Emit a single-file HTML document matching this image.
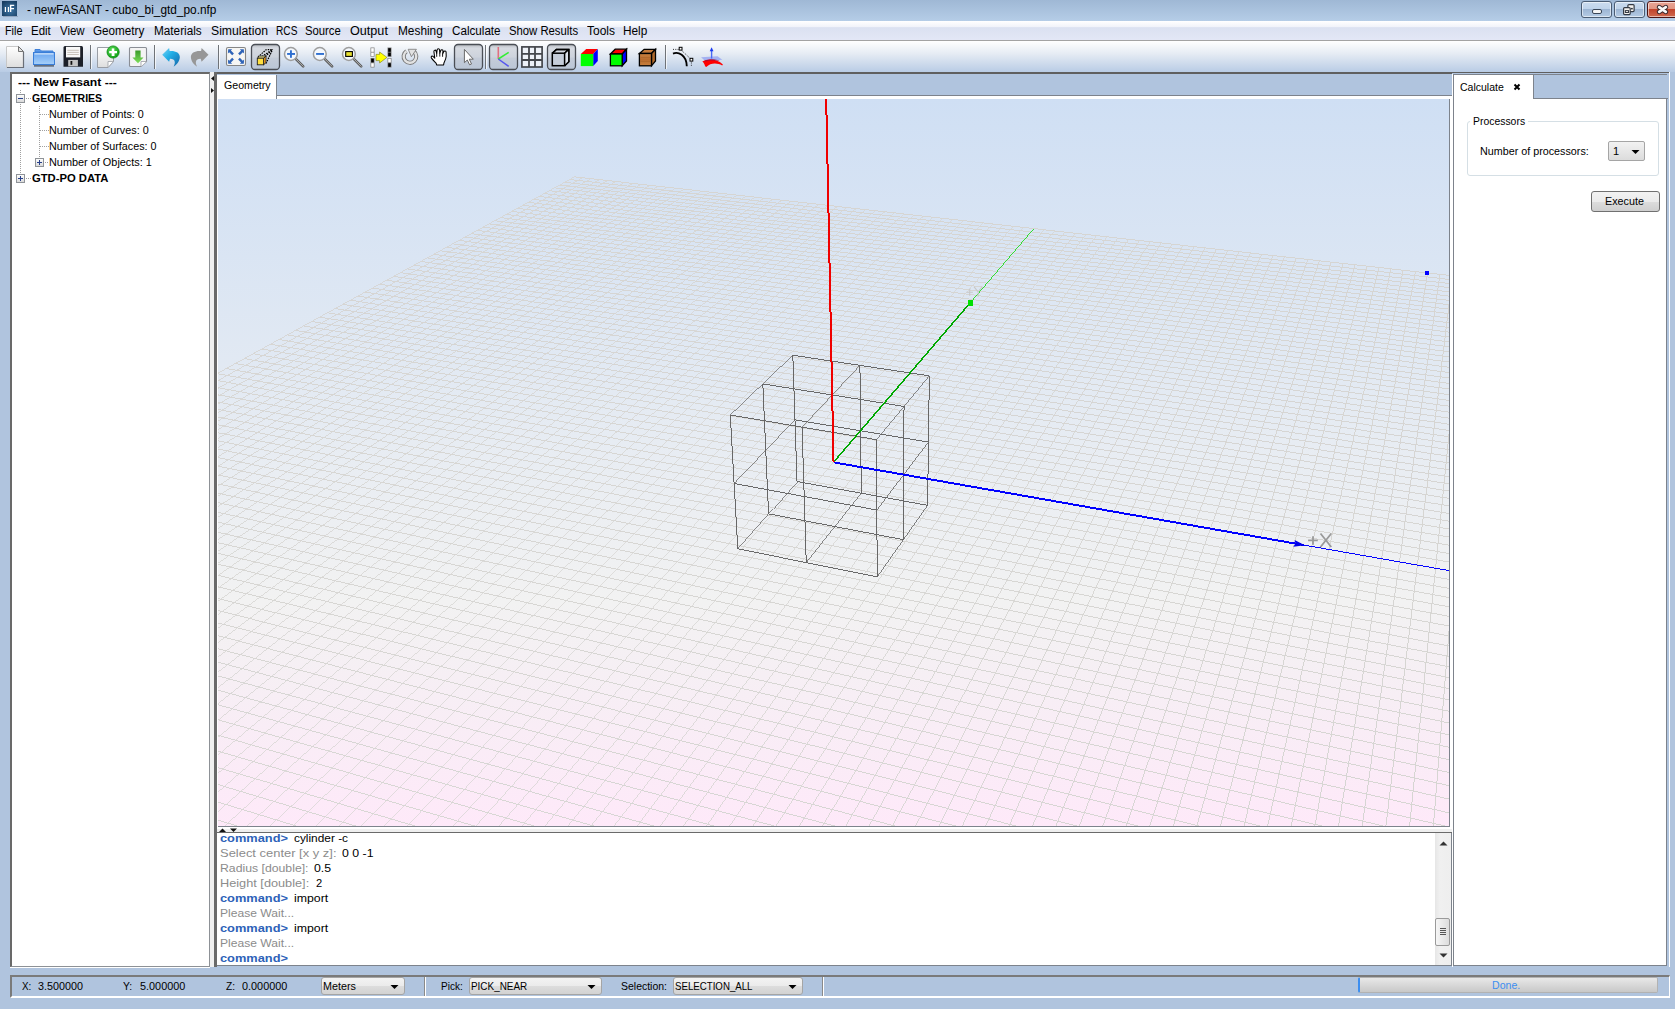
<!DOCTYPE html><html><head><meta charset="utf-8"><style>
*{margin:0;padding:0;box-sizing:border-box}
html,body{width:1675px;height:1009px;overflow:hidden;background:#b0c4de;font-family:'Liberation Sans', sans-serif;position:relative}
.a{position:absolute}
.t{position:absolute;white-space:pre;transform-origin:0 0;line-height:normal;font-family:'Liberation Sans', sans-serif}
</style></head><body>
<div class="a" style="left:0;top:0;width:1675px;height:21px;background:linear-gradient(#9fb8d5,#b5cde7)"></div><svg class="a" style="left:0;top:0" width="20" height="18"><defs><radialGradient id="ic" cx=".55" cy=".6" r=".7"><stop offset="0" stop-color="#3f78a8"/><stop offset="1" stop-color="#173c60"/></radialGradient></defs><rect x="2" y="1" width="15" height="15" fill="url(#ic)"/><rect x="3" y="16" width="15" height="1" fill="#7d90a8" opacity=".6"/><path d="M4.8 7H6V12H4.8ZM7.8 7H9V12H7.8ZM9.9 4.7H14.2V6H11.3V8.1H14V9.3H11.3V12H9.9Z" fill="#fff"/></svg><div class="a" style="left:1581px;top:1px;width:31px;height:17px;border:1px solid #4a5c73;border-radius:3px;background:linear-gradient(#cbdcef 0,#bfd3ea 45%,#9db6d4 50%,#b5cbe4 100%);box-shadow:inset 0 0 0 1px rgba(255,255,255,.55)"></div><div class="a" style="left:1614px;top:1px;width:31px;height:17px;border:1px solid #4a5c73;border-radius:3px;background:linear-gradient(#cbdcef 0,#bfd3ea 45%,#9db6d4 50%,#b5cbe4 100%);box-shadow:inset 0 0 0 1px rgba(255,255,255,.55)"></div><div class="a" style="left:1647px;top:1px;width:31px;height:17px;border:1px solid #4b1414;border-radius:3px;background:linear-gradient(#eba595 0,#e09684 45%,#c2442c 50%,#cf6a4f 100%);box-shadow:inset 0 0 0 1px rgba(255,255,255,.55)"></div><div class="a" style="left:1592px;top:9px;width:10px;height:5px;background:#f4f4f4;border:1px solid #3a4657;border-radius:2px"></div><svg class="a" style="left:1620px;top:2px" width="20" height="15"><rect x="7.9" y="2.6" width="6.2" height="7" rx="1" fill="#f4f2ee" stroke="#343a44" stroke-width="1.2"/><rect x="11" y="5.9" width="1.8" height="1.5" fill="#343a44"/><rect x="3.6" y="5.6" width="6.6" height="7" rx="1" fill="#f4f2ee" stroke="#343a44" stroke-width="1.2"/><rect x="5.4" y="8.6" width="3.1" height="1.9" fill="#f4f2ee" stroke="#343a44" stroke-width="1"/></svg><svg class="a" style="left:1654px;top:2px" width="18" height="15"><path d="M5.2 5.2L11.8 9.8M11.8 5.2L5.2 9.8" stroke="#3a2a2e" stroke-width="4.8" stroke-linecap="round"/><path d="M5.2 5.2L11.8 9.8M11.8 5.2L5.2 9.8" stroke="#f8f8f8" stroke-width="2.8" stroke-linecap="round"/></svg><div class="a" style="left:0;top:21px;width:1675px;height:20px;background:linear-gradient(#ffffff 0,#f1f3fa 30%,#dbe1f1 35%,#e3e7f6 100%);border-bottom:1px solid #a3a3a3"></div><div class="a" style="left:0;top:41px;width:1675px;height:31px;background:linear-gradient(#ffffff 0,#e6ecf4 40%,#b9cce5 100%)"></div><svg class="a" style="left:0;top:0" width="760" height="75"><defs>
<linearGradient id="pg" x1="0" y1="0" x2="0" y2="1"><stop offset="0" stop-color="#b9bcc2"/><stop offset=".15" stop-color="#d6dae1"/><stop offset=".5" stop-color="#cdd3dc"/><stop offset=".55" stop-color="#c4ccd8"/><stop offset="1" stop-color="#bac6d6"/></linearGradient>
<linearGradient id="pagew" x1="0" y1="0" x2="0" y2="1"><stop offset="0" stop-color="#ffffff"/><stop offset="1" stop-color="#dedede"/></linearGradient>
<linearGradient id="fold" x1="0" y1="0" x2="0" y2="1"><stop offset="0" stop-color="#6aa6f0"/><stop offset="1" stop-color="#a6d0fa"/></linearGradient>
<linearGradient id="undo" x1="0" y1="0" x2="1" y2="1"><stop offset="0" stop-color="#7fd3f2"/><stop offset=".4" stop-color="#22b0e8"/><stop offset="1" stop-color="#1665a8"/></linearGradient>
<linearGradient id="garr" x1="0" y1="0" x2="0" y2="1"><stop offset="0" stop-color="#3a9a2a"/><stop offset="1" stop-color="#7ee05a"/></linearGradient>
<radialGradient id="gcir" cx=".4" cy=".35" r=".7"><stop offset="0" stop-color="#5ee05a"/><stop offset="1" stop-color="#0a9a10"/></radialGradient>
<linearGradient id="wood" x1="0" y1="0" x2="0" y2="1"><stop offset="0" stop-color="#c98040"/><stop offset=".5" stop-color="#b86c2e"/><stop offset="1" stop-color="#c8803e"/></linearGradient>
</defs><path d="M6.5 46.5H18.5L23.5 51.5V67.5H6.5Z" fill="url(#pagew)" stroke="#c8c8c8" stroke-width="1"/><path d="M23.5 52V67.5H7" stroke="#6a6f78" stroke-width="1.2" fill="none"/><path d="M18.5 46.5L23.5 51.5H18.5Z" fill="#e4e4e4" stroke="#555" stroke-width=".8"/><path d="M35 52V49.5H40L41.5 51H53V52Z" fill="#5c9ae8" stroke="#3f80d8" stroke-width="1"/><rect x="33.5" y="52.5" width="21" height="12" fill="url(#fold)" stroke="#3a7ed8" stroke-width="1"/><rect x="34.5" y="53.3" width="19" height="1.2" fill="#d6e8fc"/><rect x="34" y="65.3" width="20" height="1.2" fill="#3a4350"/><path d="M63.5 47.5Q63.5 46 65 46H81.5Q83 46 83 47.5V66.8H63.5Z" fill="#1c2029"/><rect x="66" y="46.8" width="14.2" height="10.6" fill="#f8f8f8"/><path d="M67.3 50.3H78.8M67.3 52.4H78.8M67.3 54.5H78.8" stroke="#c8c2ba" stroke-width="1"/><rect x="68.2" y="59.9" width="9.7" height="6.4" fill="#c4c4c4"/><rect x="70.5" y="61" width="1.8" height="3.8" fill="#111"/><rect x="90" y="45" width="1" height="24" fill="#6f7378"/><rect x="91" y="45" width="1" height="24" fill="#ffffff" opacity=".7"/><path d="M97.5 47.5H113.5V61.5L108 67.5H97.5Z" fill="url(#pagew)" stroke="#9a9ea5" stroke-width="1"/><path d="M108 67.5V61.5H113.5Z" fill="#fff" stroke="#9a9ea5" stroke-width=".8"/><circle cx="113.1" cy="52" r="6.1" fill="url(#gcir)" stroke="#0a8a10" stroke-width=".8"/><path d="M109.2 50.9H117V53.3H114.3V55.9H111.8V53.3H109.2Z" fill="#fff"/><rect x="111.8" y="48.4" width="2.5" height="7.5" fill="#fff"/><path d="M129.5 48.5Q129.5 47.5 130.5 47.5H145.5Q146.5 47.5 146.5 48.5V61.5L141 66.5H130.5Q129.5 66.5 129.5 65.5Z" fill="#f4f4f4" stroke="#8a8e95" stroke-width="1.1"/><path d="M141 66.5V61.5H146.5" fill="#fff" stroke="#9a9ea5" stroke-width=".8"/><path d="M135.3 50.4H140.6V57.4H143.5L138 63.2L132.4 57.4H135.3Z" fill="url(#garr)"/><rect x="154" y="45" width="1" height="24" fill="#6f7378"/><rect x="155" y="45" width="1" height="24" fill="#ffffff" opacity=".7"/><path d="M162.2 54.7L169.1 47.9L169.6 51.0C175 50.5 180.2 52.5 179.8 57.5C179.5 62 176 65 173.6 66.7C175.5 63 175.8 59 170 58.8L169.1 61.7Z" fill="url(#undo)"/><g transform="translate(370.7 0) scale(-1 1)"><path d="M162.2 54.7L169.1 47.9L169.6 51.0C175 50.5 180.2 52.5 179.8 57.5C179.5 62 176 65 173.6 66.7C175.5 63 175.8 59 170 58.8L169.1 61.7Z" fill="#979797"/></g><rect x="218" y="45" width="1" height="24" fill="#6f7378"/><rect x="219" y="45" width="1" height="24" fill="#ffffff" opacity=".7"/><rect x="226.5" y="47.5" width="19" height="18" rx="1.5" fill="#f6f6f4" stroke="#858585" stroke-width="1.1"/><path d="M228.2 49.2h4l-1.3 1.3l3 3l-1.7 1.7l-3 -3l-1.3 1.3Z" fill="#2f64b8"/><path d="M243.8 49.2h-4l1.3 1.3l-3 3l1.7 1.7l3 -3l1.3 1.3Z" fill="#2f64b8"/><path d="M228.2 63.8h4l-1.3 -1.3l3 -3l-1.7 -1.7l-3 3l-1.3 -1.3Z" fill="#2f64b8"/><path d="M243.8 63.8h-4l1.3 -1.3l-3 -3l1.7 -1.7l3 3l1.3 -1.3Z" fill="#2f64b8"/><rect x="251.5" y="44.5" width="28" height="25" rx="3.5" fill="url(#pg)" stroke="#4a4e55" stroke-width="1.3"/><path d="M258 57L266 49.8L272.6 49.5M263.5 58.3L272.6 49.5M266 63.5L272.6 49.5M262 56.5L272.6 49.5" stroke="#000" stroke-width="1.2" stroke-dasharray="1.5 1" fill="none"/><path d="M257.3 58.2L259.5 56H266L263.6 58.2Z" fill="#fff59a" stroke="#222" stroke-width=".9"/><path d="M263.6 58.2L266 56V62.5L263.6 64.8Z" fill="#f5a020" stroke="#222" stroke-width=".9"/><rect x="257.3" y="58.2" width="6.3" height="6.6" fill="#ffe040" stroke="#222" stroke-width=".9"/><path d="M296.2 59.3L303.2 66.3" stroke="#5a5a5a" stroke-width="2.6" stroke-linecap="round"/><path d="M296.2 59.3L303.2 66.3" stroke="#b0b0b0" stroke-width="1" stroke-linecap="round"/><circle cx="290.9" cy="54" r="6.4" fill="#f4f8fd" stroke="#9e9e9e" stroke-width="1.5"/><rect x="287.1" y="53" width="7.9" height="1.9" fill="#2f6fd0"/><rect x="290" y="50.3" width="1.9" height="7.5" fill="#2f6fd0"/><path d="M325.1 59.3L332.1 66.3" stroke="#5a5a5a" stroke-width="2.6" stroke-linecap="round"/><path d="M325.1 59.3L332.1 66.3" stroke="#b0b0b0" stroke-width="1" stroke-linecap="round"/><circle cx="319.8" cy="54" r="6.4" fill="#f4f8fd" stroke="#9e9e9e" stroke-width="1.5"/><rect x="316.1" y="53" width="7.9" height="1.9" fill="#2f6fd0"/><path d="M354.2 59.3L361.2 66.3" stroke="#5a5a5a" stroke-width="2.6" stroke-linecap="round"/><path d="M354.2 59.3L361.2 66.3" stroke="#b0b0b0" stroke-width="1" stroke-linecap="round"/><circle cx="348.9" cy="54" r="6.4" fill="#f4f8fd" stroke="#9e9e9e" stroke-width="1.5"/><rect x="345.7" y="51.6" width="6.7" height="4.8" fill="#e8e030" stroke="#000" stroke-width="1.1"/><rect x="370.5" y="47.5" width="4" height="9.3" fill="#808080"/><rect x="370.5" y="58" width="4" height="9.5" fill="#808080"/><rect x="371.2" y="48.2" width="2.6" height="3.6" fill="#fff"/><rect x="371.2" y="52.6" width="2.6" height="3.6" fill="#fff"/><rect x="371.2" y="58.7" width="2.6" height="3.6" fill="#000"/><rect x="371.2" y="63.2" width="2.6" height="3.6" fill="#fff"/><rect x="387.5" y="47.5" width="4" height="9.3" fill="#808080"/><rect x="387.5" y="58" width="4" height="9.5" fill="#808080"/><rect x="388.2" y="48.2" width="2.6" height="3.6" fill="#000"/><rect x="388.2" y="52.6" width="2.6" height="3.6" fill="#000"/><rect x="388.2" y="58.7" width="2.6" height="3.6" fill="#fff"/><rect x="388.2" y="63.2" width="2.6" height="3.6" fill="#000"/><path d="M376 54.4H379.6V52L386.9 57.4L379.6 63V60.6H376Z" fill="#ffff00" stroke="#7a7a10" stroke-width=".6"/><path d="M406.5 51.2A6.3 6.3 0 1 0 413.8 51.5" stroke="#777" stroke-width="4.2" fill="none"/><path d="M406.5 51.2A6.3 6.3 0 1 0 413.8 51.5" stroke="#e2e2e2" stroke-width="2.4" fill="none"/><path d="M408.2 49.3H416.4L411.4 56.7Z" fill="#e2e2e2" stroke="#777" stroke-width=".8"/><path d="M436.6 64.9L436.2 63.4C434.6 61.6 432.6 59.6 431.5 58.1C430.8 57 431.4 55.6 432.7 56.2L434.8 58.2L433.9 51.6C433.7 49.9 435.8 49.6 436.1 51.2L436.7 53.6L437.1 50.1C437.2 48.4 439.5 48.4 439.6 50.1L439.8 53.4L440.7 50.7C441.1 49.2 443.1 49.4 443 51L442.6 54.1L443.7 51.7C444.4 50.4 446.3 50.8 446.1 52.4L446.2 56.2C446 59 444.6 61.6 443.9 63.1L443.6 64.9Z" fill="#fff" stroke="#000" stroke-width="1.05" stroke-linejoin="round"/><path d="M436.7 53.6V56.8M439.8 53.4V56.6M442.6 54.1V56.8" stroke="#000" stroke-width=".9"/><rect x="454.5" y="44.5" width="28" height="25" rx="3.5" fill="url(#pg)" stroke="#4a4e55" stroke-width="1.3"/><path d="M464.4 49.4V62.7L467.3 60L469.6 64.8L471.5 64L469.3 59.2H473.3Z" fill="#fff" stroke="#6a6a6a" stroke-width="1"/><rect x="485" y="45" width="1" height="24" fill="#6f7378"/><rect x="486" y="45" width="1" height="24" fill="#ffffff" opacity=".7"/><rect x="489.5" y="44.5" width="28" height="25" rx="3.5" fill="url(#pg)" stroke="#4a4e55" stroke-width="1.3"/><path d="M498.3 47V59" stroke="#e07080" stroke-width="1.6"/><path d="M498.3 59L508.7 52.3" stroke="#33ee33" stroke-width="1.5"/><path d="M498.3 59L508.7 66.3" stroke="#5555ee" stroke-width="1.5"/><rect x="521.9" y="46.9" width="20.2" height="20.1" fill="#eef2f8" stroke="#44474c" stroke-width="1.7"/><path d="M529 47V67M535 47V67M522 53.8H542M522 60H542" stroke="#44474c" stroke-width="1.8"/><rect x="547.5" y="44.5" width="28" height="25" rx="3.5" fill="url(#pg)" stroke="#4a4e55" stroke-width="1.3"/><path d="M552.3 53.2L556.4 49.4H568.8V61.7L564.6 65.7M564.6 53.2L568.8 49.4" stroke="#000" stroke-width="1.5" fill="none"/><path d="M564.6 53.2L568.8 49.4V61.7L564.6 65.7Z" fill="#dde3ec"/><rect x="552.3" y="53.2" width="12.3" height="12.5" fill="#c6ceda" stroke="#000" stroke-width="1.5"/><path d="M552.3 53.2L556.4 49.4H568.8V61.7L564.6 65.7M564.6 53.2L568.8 49.4" stroke="#000" stroke-width="1.5" fill="none"/><path d="M580.8 54L586.2 48.9H597.8L593.2 54Z" fill="#ff0000"/><path d="M593.2 54L597.8 48.9V61L593.2 66.1Z" fill="#0000ff"/><rect x="580.8" y="54" width="12.4" height="12.1" fill="#00ff00"/><path d="M610.4 54L615.2 49.2H626.5L622.2 54Z" fill="#ff0000" stroke="#000" stroke-width="1.3"/><path d="M622.2 54L626.5 49.2V61L622.2 65.8Z" fill="#0000ff" stroke="#000" stroke-width="1.3"/><rect x="610.4" y="54" width="11.8" height="11.8" fill="#00ff00" stroke="#000" stroke-width="1.3"/><path d="M639.4 53.5L644.2 49.3H655.5L651.5 53.5Z" fill="#c47a3c" stroke="#000" stroke-width="1.3"/><path d="M651.5 53.5L655.5 49.3V61L651.5 65.8Z" fill="#b06a2c" stroke="#000" stroke-width="1.3"/><rect x="639.4" y="53.5" width="12.1" height="12.3" fill="url(#wood)" stroke="#000" stroke-width="1.3"/><path d="M641 57.5H650M640.5 61.5H650" stroke="#9a5a22" stroke-width=".6" opacity=".6"/><rect x="665" y="45" width="1" height="24" fill="#6f7378"/><rect x="666" y="45" width="1" height="24" fill="#ffffff" opacity=".7"/><path d="M673 53.6C678 51.5 686.5 54.5 686.8 66.3" stroke="#000" stroke-width="1.9" fill="none"/><path d="M673 49.4H680.5L691.4 59.6V66.4" stroke="#000" stroke-width=".8" stroke-dasharray="1 1.3" fill="none"/><rect x="679.2" y="47.3" width="2.8" height="2.8" fill="#fff" stroke="#000" stroke-width="1"/><rect x="690" y="58.3" width="2.8" height="2.8" fill="#fff" stroke="#000" stroke-width="1"/><path d="M701 57.3L717.5 56.2L722.3 59.8L705.5 61.2Z" fill="#7f8ff2" opacity=".6"/><path d="M702.3 61.6C707 58.6 717 58.2 722.9 64.4L722.2 65.4C717 62.6 710.5 62.6 706.3 67.1L705.1 66.2C704.6 64.2 703.6 62.6 702.3 61.6Z" fill="#ff0000"/><path d="M704 60.9C709 58.8 716 58.6 720 61.2L716 60.6C712 60.2 708 60.4 705 61.6Z" fill="#8a1040" opacity=".7"/><path d="M711.6 58.6V50" stroke="#4a6af5" stroke-width="1.4"/><path d="M709.7 51.2L711.6 47.3L713.5 51.2Z" fill="#1a3af0"/></svg><div class="a" style="left:214px;top:72px;width:1455px;height:2px;background:#5f5f5f"></div><div class="a" style="left:10px;top:72px;width:200px;height:895px;background:#fff;border-left:2px solid #696969;border-top:2px solid #696969;border-right:1px solid #8d9196;border-bottom:1px solid #8d9196"></div><div class="a" style="left:10px;top:967px;width:200px;height:1px;background:#fff"></div><svg class="a" style="left:0;top:0" width="210" height="190"><rect x="20" y="90" width="1" height="1" fill="#a0a0a0"/><rect x="20" y="92" width="1" height="1" fill="#a0a0a0"/><rect x="20" y="94" width="1" height="1" fill="#a0a0a0"/><rect x="20" y="96" width="1" height="1" fill="#a0a0a0"/><rect x="20" y="98" width="1" height="1" fill="#a0a0a0"/><rect x="20" y="100" width="1" height="1" fill="#a0a0a0"/><rect x="20" y="102" width="1" height="1" fill="#a0a0a0"/><rect x="20" y="104" width="1" height="1" fill="#a0a0a0"/><rect x="20" y="106" width="1" height="1" fill="#a0a0a0"/><rect x="20" y="108" width="1" height="1" fill="#a0a0a0"/><rect x="20" y="110" width="1" height="1" fill="#a0a0a0"/><rect x="20" y="112" width="1" height="1" fill="#a0a0a0"/><rect x="20" y="114" width="1" height="1" fill="#a0a0a0"/><rect x="20" y="116" width="1" height="1" fill="#a0a0a0"/><rect x="20" y="118" width="1" height="1" fill="#a0a0a0"/><rect x="20" y="120" width="1" height="1" fill="#a0a0a0"/><rect x="20" y="122" width="1" height="1" fill="#a0a0a0"/><rect x="20" y="124" width="1" height="1" fill="#a0a0a0"/><rect x="20" y="126" width="1" height="1" fill="#a0a0a0"/><rect x="20" y="128" width="1" height="1" fill="#a0a0a0"/><rect x="20" y="130" width="1" height="1" fill="#a0a0a0"/><rect x="20" y="132" width="1" height="1" fill="#a0a0a0"/><rect x="20" y="134" width="1" height="1" fill="#a0a0a0"/><rect x="20" y="136" width="1" height="1" fill="#a0a0a0"/><rect x="20" y="138" width="1" height="1" fill="#a0a0a0"/><rect x="20" y="140" width="1" height="1" fill="#a0a0a0"/><rect x="20" y="142" width="1" height="1" fill="#a0a0a0"/><rect x="20" y="144" width="1" height="1" fill="#a0a0a0"/><rect x="20" y="146" width="1" height="1" fill="#a0a0a0"/><rect x="20" y="148" width="1" height="1" fill="#a0a0a0"/><rect x="20" y="150" width="1" height="1" fill="#a0a0a0"/><rect x="20" y="152" width="1" height="1" fill="#a0a0a0"/><rect x="20" y="154" width="1" height="1" fill="#a0a0a0"/><rect x="20" y="156" width="1" height="1" fill="#a0a0a0"/><rect x="20" y="158" width="1" height="1" fill="#a0a0a0"/><rect x="20" y="160" width="1" height="1" fill="#a0a0a0"/><rect x="20" y="162" width="1" height="1" fill="#a0a0a0"/><rect x="20" y="164" width="1" height="1" fill="#a0a0a0"/><rect x="20" y="166" width="1" height="1" fill="#a0a0a0"/><rect x="20" y="168" width="1" height="1" fill="#a0a0a0"/><rect x="20" y="170" width="1" height="1" fill="#a0a0a0"/><rect x="20" y="172" width="1" height="1" fill="#a0a0a0"/><rect x="26" y="98" width="1" height="1" fill="#a0a0a0"/><rect x="28" y="98" width="1" height="1" fill="#a0a0a0"/><rect x="30" y="98" width="1" height="1" fill="#a0a0a0"/><rect x="26" y="178" width="1" height="1" fill="#a0a0a0"/><rect x="28" y="178" width="1" height="1" fill="#a0a0a0"/><rect x="30" y="178" width="1" height="1" fill="#a0a0a0"/><rect x="39" y="106" width="1" height="1" fill="#a0a0a0"/><rect x="39" y="108" width="1" height="1" fill="#a0a0a0"/><rect x="39" y="110" width="1" height="1" fill="#a0a0a0"/><rect x="39" y="112" width="1" height="1" fill="#a0a0a0"/><rect x="39" y="114" width="1" height="1" fill="#a0a0a0"/><rect x="39" y="116" width="1" height="1" fill="#a0a0a0"/><rect x="39" y="118" width="1" height="1" fill="#a0a0a0"/><rect x="39" y="120" width="1" height="1" fill="#a0a0a0"/><rect x="39" y="122" width="1" height="1" fill="#a0a0a0"/><rect x="39" y="124" width="1" height="1" fill="#a0a0a0"/><rect x="39" y="126" width="1" height="1" fill="#a0a0a0"/><rect x="39" y="128" width="1" height="1" fill="#a0a0a0"/><rect x="39" y="130" width="1" height="1" fill="#a0a0a0"/><rect x="39" y="132" width="1" height="1" fill="#a0a0a0"/><rect x="39" y="134" width="1" height="1" fill="#a0a0a0"/><rect x="39" y="136" width="1" height="1" fill="#a0a0a0"/><rect x="39" y="138" width="1" height="1" fill="#a0a0a0"/><rect x="39" y="140" width="1" height="1" fill="#a0a0a0"/><rect x="39" y="142" width="1" height="1" fill="#a0a0a0"/><rect x="39" y="144" width="1" height="1" fill="#a0a0a0"/><rect x="39" y="146" width="1" height="1" fill="#a0a0a0"/><rect x="39" y="148" width="1" height="1" fill="#a0a0a0"/><rect x="39" y="150" width="1" height="1" fill="#a0a0a0"/><rect x="39" y="152" width="1" height="1" fill="#a0a0a0"/><rect x="39" y="154" width="1" height="1" fill="#a0a0a0"/><rect x="39" y="156" width="1" height="1" fill="#a0a0a0"/><rect x="40" y="114" width="1" height="1" fill="#a0a0a0"/><rect x="42" y="114" width="1" height="1" fill="#a0a0a0"/><rect x="44" y="114" width="1" height="1" fill="#a0a0a0"/><rect x="46" y="114" width="1" height="1" fill="#a0a0a0"/><rect x="48" y="114" width="1" height="1" fill="#a0a0a0"/><rect x="40" y="130" width="1" height="1" fill="#a0a0a0"/><rect x="42" y="130" width="1" height="1" fill="#a0a0a0"/><rect x="44" y="130" width="1" height="1" fill="#a0a0a0"/><rect x="46" y="130" width="1" height="1" fill="#a0a0a0"/><rect x="48" y="130" width="1" height="1" fill="#a0a0a0"/><rect x="40" y="146" width="1" height="1" fill="#a0a0a0"/><rect x="42" y="146" width="1" height="1" fill="#a0a0a0"/><rect x="44" y="146" width="1" height="1" fill="#a0a0a0"/><rect x="46" y="146" width="1" height="1" fill="#a0a0a0"/><rect x="48" y="146" width="1" height="1" fill="#a0a0a0"/><rect x="45" y="162" width="1" height="1" fill="#a0a0a0"/><rect x="47" y="162" width="1" height="1" fill="#a0a0a0"/><defs><linearGradient id="bx" x1="0" y1="0" x2="0" y2="1"><stop offset="0" stop-color="#fff"/><stop offset="1" stop-color="#d8d8d8"/></linearGradient></defs><rect x="16.5" y="94.5" width="8" height="8" fill="url(#bx)" stroke="#8f9398" stroke-width="1"/><rect x="18" y="98" width="5" height="1" fill="#27408b"/><rect x="35.5" y="158.5" width="8" height="8" fill="url(#bx)" stroke="#8f9398" stroke-width="1"/><rect x="37" y="162" width="5" height="1" fill="#27408b"/><rect x="39" y="160" width="1" height="5" fill="#27408b"/><rect x="16.5" y="174.5" width="8" height="8" fill="url(#bx)" stroke="#8f9398" stroke-width="1"/><rect x="18" y="178" width="5" height="1" fill="#27408b"/><rect x="20" y="176" width="1" height="5" fill="#27408b"/></svg><div class="a" style="left:210px;top:72px;width:4px;height:895px;background:#f0f0f0"></div><div class="a" style="left:214px;top:72px;width:3px;height:895px;background:#6a6a6a"></div><div class="a" style="left:217px;top:74px;width:1236px;height:25px;background:#b0c4de"></div><div class="a" style="left:217px;top:95px;width:1236px;height:1px;background:#7d838c"></div><div class="a" style="left:217px;top:96px;width:1233px;height:3px;background:#fff"></div><div class="a" style="left:217px;top:75px;width:60px;height:24px;background:#fff;border-right:1px solid #7d838c"></div><div class="a" style="left:217px;top:99px;width:1px;height:728px;background:#fff"></div><div class="a" style="left:218px;top:99px;width:1231px;height:727px;overflow:hidden"><svg width="1231" height="727" style="position:absolute;left:0;top:0">
<defs><linearGradient id="bg" x1="0" y1="0" x2="0" y2="1">
<stop offset="0" stop-color="#cfdff4"/><stop offset="0.69" stop-color="#f2f2f2"/><stop offset="1" stop-color="#fee9f9"/></linearGradient></defs>
<rect width="1231" height="727" fill="url(#bg)"/>
<g stroke="#d6d5d2" fill="none" shape-rendering="crispEdges"><path d="M-654.29 634.15L356.57 77.82" stroke-width="0.876"/><path d="M-654.29 634.15L1577.61 1423.72" stroke-width="0.943"/><path d="M-641.85 638.55L364.78 78.74" stroke-width="0.874"/><path d="M-633.68 622.81L1572.58 1388.63" stroke-width="0.945"/><path d="M-629.30 642.99L373.03 79.67" stroke-width="0.872"/><path d="M-613.49 611.70L1567.74 1354.83" stroke-width="0.947"/><path d="M-616.64 647.47L381.31 80.61" stroke-width="0.870"/><path d="M-593.73 600.82L1563.07 1322.26" stroke-width="0.948"/><path d="M-603.87 651.99L389.63 81.54" stroke-width="0.867"/><path d="M-574.36 590.16L1558.57 1290.84" stroke-width="0.950"/><path d="M-590.97 656.55L397.98 82.49" stroke-width="0.865"/><path d="M-555.38 579.72L1554.23 1260.52" stroke-width="0.952"/><path d="M-577.96 661.15L406.37 83.43" stroke-width="0.862"/><path d="M-536.79 569.48L1550.03 1231.24" stroke-width="0.953"/><path d="M-564.83 665.80L414.80 84.38" stroke-width="0.860"/><path d="M-518.56 559.45L1545.98 1202.94" stroke-width="0.955"/><path d="M-551.58 670.49L423.27 85.34" stroke-width="0.857"/><path d="M-500.68 549.61L1542.06 1175.59" stroke-width="0.956"/><path d="M-538.21 675.22L431.77 86.29" stroke-width="0.855"/><path d="M-483.15 539.96L1538.27 1149.12" stroke-width="0.957"/><path d="M-524.71 679.99L440.31 87.26" stroke-width="0.852"/><path d="M-465.96 530.50L1534.60 1123.51" stroke-width="0.959"/><path d="M-511.08 684.81L448.89 88.22" stroke-width="0.849"/><path d="M-449.10 521.22L1531.04 1098.70" stroke-width="0.960"/><path d="M-497.33 689.68L457.50 89.20" stroke-width="0.847"/><path d="M-432.55 512.11L1527.60 1074.67" stroke-width="0.961"/><path d="M-483.44 694.59L466.16 90.17" stroke-width="0.844"/><path d="M-416.31 503.18L1524.26 1051.37" stroke-width="0.962"/><path d="M-469.43 699.55L474.85 91.15" stroke-width="0.841"/><path d="M-400.37 494.41L1521.03 1028.78" stroke-width="0.963"/><path d="M-455.28 704.55L483.58 92.13" stroke-width="0.838"/><path d="M-384.72 485.79L1517.89 1006.86" stroke-width="0.964"/><path d="M-440.99 709.61L492.35 93.12" stroke-width="0.834"/><path d="M-369.36 477.34L1514.84 985.57" stroke-width="0.965"/><path d="M-426.57 714.71L501.16 94.12" stroke-width="0.831"/><path d="M-354.27 469.03L1511.88 964.91" stroke-width="0.966"/><path d="M-412.01 719.86L510.01 95.11" stroke-width="0.828"/><path d="M-339.45 460.88L1509.00 944.83" stroke-width="0.967"/><path d="M-397.30 725.06L518.90 96.12" stroke-width="0.824"/><path d="M-324.90 452.87L1506.20 925.31" stroke-width="0.968"/><path d="M-382.46 730.32L527.83 97.12" stroke-width="0.821"/><path d="M-310.59 445.00L1503.49 906.34" stroke-width="0.969"/><path d="M-367.46 735.62L536.80 98.13" stroke-width="0.817"/><path d="M-296.54 437.26L1500.84 887.88" stroke-width="0.970"/><path d="M-352.32 740.98L545.81 99.15" stroke-width="0.814"/><path d="M-282.73 429.66L1498.27 869.92" stroke-width="0.971"/><path d="M-337.03 746.39L554.86 100.17" stroke-width="0.810"/><path d="M-269.15 422.19L1495.76 852.43" stroke-width="0.972"/><path d="M-321.58 751.85L563.95 101.19" stroke-width="0.806"/><path d="M-255.80 414.84L1493.32 835.41" stroke-width="0.972"/><path d="M-305.98 757.37L573.09 102.22" stroke-width="0.802"/><path d="M-242.68 407.62L1490.95 818.82" stroke-width="0.973"/><path d="M-290.23 762.94L582.26 103.26" stroke-width="0.798"/><path d="M-229.77 400.52L1488.63 802.66" stroke-width="0.974"/><path d="M-274.31 768.57L591.48 104.30" stroke-width="0.793"/><path d="M-217.08 393.53L1486.38 786.90" stroke-width="0.974"/><path d="M-258.24 774.26L600.74 105.34" stroke-width="0.789"/><path d="M-204.59 386.66L1484.17 771.54" stroke-width="0.975"/><path d="M-241.99 780.01L610.04 106.39" stroke-width="0.784"/><path d="M-192.31 379.90L1482.03 756.56" stroke-width="0.976"/><path d="M-225.58 785.81L619.39 107.44" stroke-width="0.780"/><path d="M-180.23 373.25L1479.93 741.94" stroke-width="0.976"/><path d="M-209.01 791.68L628.78 108.50" stroke-width="0.775"/><path d="M-168.33 366.70L1477.89 727.67" stroke-width="0.977"/><path d="M-192.26 797.60L638.21 109.57" stroke-width="0.770"/><path d="M-156.63 360.26L1475.89 713.74" stroke-width="0.977"/><path d="M-175.33 803.59L647.69 110.63" stroke-width="0.765"/><path d="M-145.11 353.92L1473.94 700.14" stroke-width="0.978"/><path d="M-158.23 809.64L657.21 111.71" stroke-width="0.760"/><path d="M-133.77 347.68L1472.04 686.85" stroke-width="0.978"/><path d="M-140.94 815.76L666.78 112.79" stroke-width="0.754"/><path d="M-122.61 341.54L1470.18 673.86" stroke-width="0.979"/><path d="M-123.48 821.93L676.39 113.87" stroke-width="0.749"/><path d="M-111.61 335.49L1468.36 661.17" stroke-width="0.979"/><path d="M-105.82 828.18L686.04 114.96" stroke-width="0.743"/><path d="M-100.79 329.53L1466.59 648.77" stroke-width="0.980"/><path d="M-87.98 834.49L695.75 116.05" stroke-width="0.737"/><path d="M-90.13 323.66L1464.85 636.64" stroke-width="0.980"/><path d="M-69.95 840.87L705.49 117.15" stroke-width="0.731"/><path d="M-79.62 317.88L1463.15 624.77" stroke-width="0.981"/><path d="M-51.72 847.32L715.29 118.25" stroke-width="0.725"/><path d="M-69.28 312.19L1461.48 613.16" stroke-width="0.981"/><path d="M-33.29 853.84L725.12 119.36" stroke-width="0.718"/><path d="M-59.08 306.58L1459.86 601.80" stroke-width="0.982"/><path d="M-14.66 860.43L735.01 120.48" stroke-width="0.712"/><path d="M-49.04 301.05L1458.26 590.68" stroke-width="0.982"/><path d="M4.18 867.09L744.94 121.60" stroke-width="0.709"/><path d="M-39.14 295.60L1456.70 579.80" stroke-width="0.982"/><path d="M23.22 873.83L754.93 122.72" stroke-width="0.716"/><path d="M-29.39 290.23L1455.18 569.14" stroke-width="0.983"/><path d="M42.48 880.64L764.95 123.85" stroke-width="0.723"/><path d="M-19.78 284.94L1453.68 558.70" stroke-width="0.983"/><path d="M61.95 887.53L775.03 124.99" stroke-width="0.730"/><path d="M-10.30 279.73L1452.22 548.47" stroke-width="0.984"/><path d="M81.64 894.50L785.16 126.13" stroke-width="0.738"/><path d="M-0.96 274.59L1450.78 538.45" stroke-width="0.984"/><path d="M101.56 901.54L795.33 127.28" stroke-width="0.745"/><path d="M8.25 269.52L1449.37 528.63" stroke-width="0.984"/><path d="M121.70 908.67L805.55 128.43" stroke-width="0.752"/><path d="M17.34 264.52L1447.99 519.00" stroke-width="0.985"/><path d="M142.07 915.88L815.83 129.59" stroke-width="0.759"/><path d="M26.29 259.59L1446.64 509.56" stroke-width="0.985"/><path d="M162.68 923.17L826.15 130.75" stroke-width="0.767"/><path d="M35.13 254.73L1445.32 500.30" stroke-width="0.985"/><path d="M183.52 930.54L836.52 131.92" stroke-width="0.774"/><path d="M43.84 249.93L1444.02 491.22" stroke-width="0.985"/><path d="M204.61 938.00L846.95 133.09" stroke-width="0.782"/><path d="M52.43 245.20L1442.74 482.32" stroke-width="0.986"/><path d="M225.94 945.55L857.42 134.28" stroke-width="0.789"/><path d="M60.91 240.54L1441.49 473.58" stroke-width="0.986"/><path d="M247.53 953.18L867.95 135.46" stroke-width="0.797"/><path d="M69.28 235.93L1440.26 465.00" stroke-width="0.986"/><path d="M269.37 960.91L878.52 136.65" stroke-width="0.804"/><path d="M77.53 231.39L1439.05 456.58" stroke-width="0.987"/><path d="M291.48 968.73L889.15 137.85" stroke-width="0.812"/><path d="M85.68 226.91L1437.87 448.32" stroke-width="0.987"/><path d="M313.85 976.65L899.84 139.06" stroke-width="0.819"/><path d="M93.71 222.48L1436.71 440.21" stroke-width="0.987"/><path d="M336.49 984.65L910.57 140.27" stroke-width="0.827"/><path d="M101.65 218.12L1435.56 432.24" stroke-width="0.987"/><path d="M359.40 992.76L921.36 141.48" stroke-width="0.835"/><path d="M109.47 213.81L1434.44 424.41" stroke-width="0.988"/><path d="M382.60 1000.97L932.20 142.70" stroke-width="0.842"/><path d="M117.20 209.56L1433.34 416.72" stroke-width="0.988"/><path d="M406.08 1009.27L943.10 143.93" stroke-width="0.850"/><path d="M124.83 205.36L1432.26 409.17" stroke-width="0.988"/><path d="M429.85 1017.68L954.05 145.17" stroke-width="0.857"/><path d="M132.37 201.21L1431.20 401.75" stroke-width="0.988"/><path d="M453.91 1026.20L965.05 146.41" stroke-width="0.865"/><path d="M139.80 197.12L1430.15 394.45" stroke-width="0.989"/><path d="M478.28 1034.82L976.11 147.65" stroke-width="0.872"/><path d="M147.15 193.07L1429.12 387.28" stroke-width="0.989"/><path d="M502.96 1043.55L987.23 148.91" stroke-width="0.879"/><path d="M154.40 189.08L1428.11 380.23" stroke-width="0.989"/><path d="M527.95 1052.39L998.40 150.17" stroke-width="0.887"/><path d="M161.56 185.14L1427.12 373.30" stroke-width="0.989"/><path d="M553.25 1061.34L1009.63 151.43" stroke-width="0.894"/><path d="M168.64 181.25L1426.14 366.48" stroke-width="0.989"/><path d="M578.89 1070.41L1020.92 152.71" stroke-width="0.901"/><path d="M175.63 177.40L1425.18 359.78" stroke-width="0.990"/><path d="M604.85 1079.59L1032.27 153.98" stroke-width="0.908"/><path d="M182.53 173.60L1424.24 353.18" stroke-width="0.990"/><path d="M631.15 1088.90L1043.67 155.27" stroke-width="0.915"/><path d="M189.35 169.85L1423.31 346.70" stroke-width="0.990"/><path d="M657.80 1098.33L1055.13 156.56" stroke-width="0.921"/><path d="M196.09 166.14L1422.40 340.31" stroke-width="0.990"/><path d="M684.80 1107.88L1066.65 157.86" stroke-width="0.928"/><path d="M202.74 162.48L1421.50 334.03" stroke-width="0.990"/><path d="M712.16 1117.56L1078.22 159.16" stroke-width="0.934"/><path d="M209.32 158.86L1420.61 327.85" stroke-width="0.990"/><path d="M739.88 1127.36L1089.86 160.48" stroke-width="0.940"/><path d="M215.82 155.28L1419.74 321.77" stroke-width="0.991"/><path d="M767.98 1137.30L1101.56 161.80" stroke-width="0.946"/><path d="M222.24 151.75L1418.88 315.78" stroke-width="0.991"/><path d="M796.46 1147.38L1113.32 163.12" stroke-width="0.952"/><path d="M228.59 148.25L1418.04 309.88" stroke-width="0.991"/><path d="M825.32 1157.59L1125.14 164.45" stroke-width="0.957"/><path d="M234.87 144.80L1417.20 304.07" stroke-width="0.991"/><path d="M854.58 1167.94L1137.02 165.79" stroke-width="0.963"/><path d="M241.07 141.38L1416.38 298.36" stroke-width="0.991"/><path d="M884.25 1178.44L1148.97 167.14" stroke-width="0.967"/><path d="M247.20 138.01L1415.58 292.72" stroke-width="0.991"/><path d="M914.33 1189.08L1160.97 168.49" stroke-width="0.972"/><path d="M253.26 134.67L1414.78 287.18" stroke-width="0.991"/><path d="M944.83 1199.87L1173.04 169.85" stroke-width="0.976"/><path d="M259.25 131.38L1414.00 281.71" stroke-width="0.992"/><path d="M975.77 1210.81L1185.17 171.22" stroke-width="0.980"/><path d="M265.18 128.12L1413.23 276.33" stroke-width="0.992"/><path d="M1007.14 1221.91L1197.37 172.60" stroke-width="0.984"/><path d="M271.04 124.89L1412.47 271.03" stroke-width="0.992"/><path d="M1038.96 1233.17L1209.63 173.98" stroke-width="0.987"/><path d="M276.83 121.70L1411.72 265.80" stroke-width="0.992"/><path d="M1071.25 1244.59L1221.96 175.37" stroke-width="0.990"/><path d="M282.56 118.55L1410.98 260.65" stroke-width="0.992"/><path d="M1104.00 1256.18L1234.35 176.76" stroke-width="0.993"/><path d="M288.23 115.43L1410.25 255.57" stroke-width="0.992"/><path d="M1137.23 1267.93L1246.81 178.17" stroke-width="0.995"/><path d="M293.83 112.35L1409.54 250.56" stroke-width="0.992"/><path d="M1170.95 1279.86L1259.34 179.58" stroke-width="0.997"/><path d="M299.37 109.30L1408.83 245.63" stroke-width="0.993"/><path d="M1205.17 1291.97L1271.93 181.00" stroke-width="0.998"/><path d="M304.85 106.28L1408.13 240.76" stroke-width="0.993"/><path d="M1239.91 1304.26L1284.59 182.43" stroke-width="0.999"/><path d="M310.28 103.30L1407.45 235.97" stroke-width="0.993"/><path d="M1275.16 1316.73L1297.32 183.86" stroke-width="1.000"/><path d="M315.64 100.34L1406.77 231.23" stroke-width="0.993"/><path d="M1310.96 1329.39L1310.11 185.30" stroke-width="1.000"/><path d="M320.95 97.42L1406.10 226.57" stroke-width="0.993"/><path d="M1347.30 1342.25L1322.98 186.75" stroke-width="1.000"/><path d="M326.20 94.53L1405.44 221.97" stroke-width="0.993"/><path d="M1384.20 1355.30L1335.92 188.21" stroke-width="0.999"/><path d="M331.40 91.67L1404.79 217.43" stroke-width="0.993"/><path d="M1421.68 1368.56L1348.92 189.68" stroke-width="0.998"/><path d="M336.54 88.84L1404.15 212.95" stroke-width="0.993"/><path d="M1459.75 1382.03L1362.00 191.15" stroke-width="0.997"/><path d="M341.62 86.04L1403.52 208.53" stroke-width="0.993"/><path d="M1498.41 1395.71L1375.15 192.64" stroke-width="0.995"/><path d="M346.66 83.27L1402.89 204.17" stroke-width="0.994"/><path d="M1537.69 1409.60L1388.37 194.13" stroke-width="0.993"/><path d="M351.64 80.53L1402.28 199.87" stroke-width="0.994"/><path d="M1577.61 1423.72L1401.67 195.62" stroke-width="0.990"/><path d="M356.57 77.82L1401.67 195.62" stroke-width="0.994"/></g>
<g stroke="#666666" fill="none" shape-rendering="crispEdges"><path d="M519.78 449.77L659.20 477.95" stroke-width="0.980"/><path d="M519.78 449.77L579.04 382.51" stroke-width="0.750"/><path d="M519.78 449.77L512.28 316.04" stroke-width="0.998"/><path d="M516.12 384.51L658.87 411.03" stroke-width="0.983"/><path d="M516.12 384.51L576.97 320.76" stroke-width="0.723"/><path d="M550.57 414.83L544.82 284.91" stroke-width="0.999"/><path d="M512.28 316.04L658.52 340.70" stroke-width="0.986"/><path d="M512.28 316.04L574.81 256.22" stroke-width="0.723"/><path d="M579.04 382.51L574.81 256.22" stroke-width="0.999"/><path d="M550.57 414.83L685.41 440.69" stroke-width="0.982"/><path d="M588.28 463.61L643.27 394.22" stroke-width="0.784"/><path d="M588.28 463.61L584.07 328.15" stroke-width="1.000"/><path d="M544.82 284.91L686.04 307.42" stroke-width="0.988"/><path d="M584.07 328.15L641.93 266.36" stroke-width="0.730"/><path d="M643.27 394.22L641.93 266.36" stroke-width="1.000"/><path d="M579.04 382.51L709.59 406.31" stroke-width="0.984"/><path d="M659.20 477.95L709.59 406.31" stroke-width="0.818"/><path d="M659.20 477.95L658.52 340.70" stroke-width="1.000"/><path d="M576.97 320.76L710.44 343.06" stroke-width="0.986"/><path d="M658.87 411.03L710.44 343.06" stroke-width="0.797"/><path d="M685.41 440.69L686.04 307.42" stroke-width="1.000"/><path d="M574.81 256.22L711.33 276.84" stroke-width="0.989"/><path d="M658.52 340.70L711.33 276.84" stroke-width="0.771"/><path d="M709.59 406.31L711.33 276.84" stroke-width="1.000"/></g>
<g shape-rendering="crispEdges" fill="none">
<g stroke="#0000ff"><path d="M1085.82 446.06L1446.64 509.56" stroke-width="0.985"/><path d="M615.56 363.30L1085.82 446.06" stroke-width="1.970"/></g>
<g stroke="#00e000"><path d="M752.13 203.93L815.83 129.59" stroke-width="0.759"/></g>
<g stroke="#00a800"><path d="M615.56 363.30L752.13 203.93" stroke-width="1.519"/></g>
<g stroke="#f00000"><path d="M615.56 363.30L598.15 -495.20" stroke-width="2.000"/></g>
</g>
<path d="M1086.81 446.23L1075.37 447.77L1077.45 444.59L1076.58 440.88Z" fill="#0000e8"/>
<rect x="749.53" y="201.33" width="5.2" height="5.2" fill="#00e000" shape-rendering="crispEdges"/>
<rect x="1207" y="172" width="4" height="4" fill="#0000ff"/>
<g stroke="#9a9a9a" stroke-width="1.8" fill="none">
<path d="M1090.1 441.4H1099.8M1095 437.20000000000005V445.70000000000005"/>
<path d="M1102.5 434.5L1113.3 448M1113.3 434.5L1102.5 448"/>
</g>
<g stroke="#c8c8c8" stroke-width="1.1" fill="none">
<path d="M748.5 193.2H754.9M751.7 189.60000000000002V196.8"/>
<path d="M755.9 187.60000000000002L760.1 192.8L764.3 187.60000000000002M760.1 192.8V197.7"/>
</g>
</svg></div><div class="a" style="left:1449px;top:99px;width:1px;height:728px;background:#7d838c"></div><div class="a" style="left:218px;top:826px;width:1232px;height:1px;background:#7d838c"></div><div class="a" style="left:1450px;top:96px;width:3px;height:733px;background:#fff"></div><div class="a" style="left:217px;top:827px;width:1236px;height:2px;background:#fff"></div><div class="a" style="left:217px;top:829px;width:1236px;height:3px;background:#efefef"></div><div class="a" style="left:217px;top:832px;width:1236px;height:1px;background:#6a6a6a"></div><svg class="a" style="left:217px;top:827px" width="24" height="6"><path d="M2 5L5.5 1.5L9 5Z" fill="#111"/><path d="M13 1.5L20 1.5L16.5 5Z" fill="#111"/></svg><svg class="a" style="left:210px;top:74px" width="5" height="22"><path d="M4 2L1 4.5L4 7Z" fill="#111"/><path d="M1 14L4 16.5L1 19Z" fill="#111"/></svg><div class="a" style="left:217px;top:833px;width:1235px;height:133px;background:#fff;border-bottom:1px solid #7d838c;border-right:1px solid #7d838c"></div><div class="a" style="left:1435px;top:833px;width:16px;height:132px;background:linear-gradient(90deg,#e6e6e6,#f0f0f0 30%,#eeeeee)"></div><svg class="a" style="left:1435px;top:833px" width="16" height="132"><path d="M4.5 12.5L8.5 8.5L12.5 12.5Z" fill="#333"/><path d="M4.5 120.5L8.5 124.5L12.5 120.5Z" fill="#333"/></svg><div class="a" style="left:1435px;top:918px;width:15px;height:28px;border:1px solid #9a9a9a;border-radius:2px;background:linear-gradient(90deg,#f6f6f6,#dcdcdc)"></div><svg class="a" style="left:1438px;top:925px" width="10" height="14"><path d="M2 3.5H8M2 5.5H8M2 7.5H8M2 9.5H8" stroke="#555" stroke-width="1"/></svg><div class="a" style="left:1452px;top:73px;width:217px;height:1px;background:#b0c4de"></div><div class="a" style="left:1452px;top:74px;width:1px;height:893px;background:#fff"></div><div class="a" style="left:1669px;top:72px;width:1px;height:895px;background:#fff"></div><div class="a" style="left:1453px;top:74px;width:214px;height:892px;background:#fff;border:1px solid #7d838c;border-top:1px solid #7d838c"></div><div class="a" style="left:1533px;top:75px;width:135px;height:24px;background:#b0c4de;border-bottom:1px solid #7d838c;border-left:1px solid #7d838c"></div><svg class="a" style="left:1512px;top:82px" width="10" height="10"><path d="M2.5 2.5L7.5 7.5M7.5 2.5L2.5 7.5" stroke="#000" stroke-width="2"/></svg><div class="a" style="left:1467px;top:121px;width:192px;height:55px;border:1px solid #d5dfe5;border-radius:3px"></div><div class="a" style="left:1470px;top:115px;width:58px;height:12px;background:#fff"></div><div class="a" style="left:1608px;top:141px;width:37px;height:20px;border:1px solid #a5a5a5;border-radius:2px;background:linear-gradient(#f2f2f2,#dcdcdc)"></div><svg class="a" style="left:1631px;top:149px" width="9" height="6"><path d="M0.5 1L8.5 1L4.5 5Z" fill="#000"/></svg><div class="a" style="left:1591px;top:191px;width:69px;height:21px;border:1px solid #707070;border-radius:3px;background:linear-gradient(#f2f2f2 0,#ebebeb 50%,#dddddd 51%,#cfcfcf 100%)"></div><div class="a" style="left:10px;top:975px;width:1660px;height:23px;border-top:2px solid #7a7a7a;border-left:2px solid #7a7a7a;border-bottom:2px solid #fff;border-right:1px solid #fff"></div><div class="a" style="left:424px;top:977px;width:1px;height:19px;background:#8a8a8a"></div><div class="a" style="left:425px;top:977px;width:1px;height:19px;background:#fff"></div><div class="a" style="left:822px;top:977px;width:1px;height:19px;background:#8a8a8a"></div><div class="a" style="left:823px;top:977px;width:1px;height:19px;background:#fff"></div><div class="a" style="left:321px;top:977px;width:84px;height:18px;border:1px solid #a5a5a5;border-radius:3px;background:linear-gradient(#f3f3f3 0,#ebebeb 50%,#dddddd 51%,#d2d2d2 100%)"></div><svg class="a" style="left:390px;top:984px" width="9" height="6"><path d="M0.5 1L8.5 1L4.5 5Z" fill="#000"/></svg><div class="a" style="left:469px;top:977px;width:133px;height:18px;border:1px solid #a5a5a5;border-radius:3px;background:linear-gradient(#f3f3f3 0,#ebebeb 50%,#dddddd 51%,#d2d2d2 100%)"></div><svg class="a" style="left:587px;top:984px" width="9" height="6"><path d="M0.5 1L8.5 1L4.5 5Z" fill="#000"/></svg><div class="a" style="left:673px;top:977px;width:130px;height:18px;border:1px solid #a5a5a5;border-radius:3px;background:linear-gradient(#f3f3f3 0,#ebebeb 50%,#dddddd 51%,#d2d2d2 100%)"></div><svg class="a" style="left:788px;top:984px" width="9" height="6"><path d="M0.5 1L8.5 1L4.5 5Z" fill="#000"/></svg><div class="a" style="left:1358px;top:977px;width:300px;height:16px;border:1px solid #b2b2b2;border-radius:2px;background:linear-gradient(#e8e8e8 0,#d8d8d8 50%,#c8c8c8 100%);border-left:2px solid #3c8ef0"></div>
<span class="t" style="left:26.6px;top:2.94px;font-size:12px;font-weight:normal;color:#000;transform:scaleX(0.9869)">- newFASANT - cubo_bi_gtd_po.nfp</span><span class="t" style="left:4.5px;top:23.64px;font-size:12px;font-weight:normal;color:#000;transform:scaleX(0.8995)">File</span><span class="t" style="left:31.0px;top:23.64px;font-size:12px;font-weight:normal;color:#000;transform:scaleX(0.9571)">Edit</span><span class="t" style="left:60.3px;top:23.64px;font-size:12px;font-weight:normal;color:#000;transform:scaleX(0.9536)">View</span><span class="t" style="left:93.4px;top:23.64px;font-size:12px;font-weight:normal;color:#000;transform:scaleX(0.9737)">Geometry</span><span class="t" style="left:154.3px;top:23.64px;font-size:12px;font-weight:normal;color:#000;transform:scaleX(0.9797)">Materials</span><span class="t" style="left:211.0px;top:23.64px;font-size:12px;font-weight:normal;color:#000;transform:scaleX(1.0173)">Simulation</span><span class="t" style="left:276.0px;top:23.64px;font-size:12px;font-weight:normal;color:#000;transform:scaleX(0.8444)">RCS</span><span class="t" style="left:305.0px;top:23.64px;font-size:12px;font-weight:normal;color:#000;transform:scaleX(0.9413)">Source</span><span class="t" style="left:350.0px;top:23.64px;font-size:12px;font-weight:normal;color:#000;transform:scaleX(1.0519)">Output</span><span class="t" style="left:397.6px;top:23.64px;font-size:12px;font-weight:normal;color:#000;transform:scaleX(0.9877)">Meshing</span><span class="t" style="left:452.4px;top:23.64px;font-size:12px;font-weight:normal;color:#000;transform:scaleX(0.9714)">Calculate</span><span class="t" style="left:508.7px;top:23.64px;font-size:12px;font-weight:normal;color:#000;transform:scaleX(0.9417)">Show Results</span><span class="t" style="left:586.7px;top:23.64px;font-size:12px;font-weight:normal;color:#000;transform:scaleX(0.9994)">Tools</span><span class="t" style="left:623.1px;top:23.64px;font-size:12px;font-weight:normal;color:#000;transform:scaleX(0.9843)">Help</span><span class="t" style="left:18.3px;top:75.84px;font-size:11px;font-weight:bold;color:#000;transform:scaleX(1.1083)">--- New Fasant ---</span><span class="t" style="left:31.6px;top:91.95px;font-size:11px;font-weight:bold;color:#000;transform:scaleX(0.9558)">GEOMETRIES</span><span class="t" style="left:49.4px;top:108.05px;font-size:11px;font-weight:normal;color:#000;transform:scaleX(0.9751)">Number of Points: 0</span><span class="t" style="left:49.4px;top:124.05px;font-size:11px;font-weight:normal;color:#000;transform:scaleX(0.9824)">Number of Curves: 0</span><span class="t" style="left:49.4px;top:140.04px;font-size:11px;font-weight:normal;color:#000;transform:scaleX(0.9767)">Number of Surfaces: 0</span><span class="t" style="left:49.4px;top:156.04px;font-size:11px;font-weight:normal;color:#000;transform:scaleX(0.9900)">Number of Objects: 1</span><span class="t" style="left:31.6px;top:171.84px;font-size:11px;font-weight:bold;color:#000;transform:scaleX(1.0221)">GTD-PO DATA</span><span class="t" style="left:223.5px;top:79.05px;font-size:11px;font-weight:normal;color:#000;transform:scaleX(0.9649)">Geometry</span><span class="t" style="left:1459.6px;top:80.95px;font-size:11px;font-weight:normal;color:#000;transform:scaleX(0.9551)">Calculate</span><span class="t" style="left:1473.2px;top:114.64px;font-size:11px;font-weight:normal;color:#000;transform:scaleX(0.9467)">Processors</span><span class="t" style="left:1480.2px;top:145.04px;font-size:11px;font-weight:normal;color:#000;transform:scaleX(0.9778)">Number of processors:</span><span class="t" style="left:1613.0px;top:145.04px;font-size:11px;font-weight:normal;color:#000;transform:scaleX(1.0000)">1</span><span class="t" style="left:1605.3px;top:195.04px;font-size:11px;font-weight:normal;color:#000;transform:scaleX(0.9786)">Execute</span><span class="t" style="left:220.2px;top:832.04px;font-size:11px;font-weight:bold;color:#2d62b8;transform:scaleX(1.1646);clip-path:inset(0.96px 0 0 0)">command&gt;</span><span class="t" style="left:293.7px;top:832.04px;font-size:11px;font-weight:normal;color:#000;transform:scaleX(1.0773);clip-path:inset(0.96px 0 0 0)">cylinder -c</span><span class="t" style="left:220.2px;top:847.04px;font-size:11px;font-weight:normal;color:#8c8c8c;transform:scaleX(1.1762)">Select center [x y z]:</span><span class="t" style="left:341.5px;top:847.04px;font-size:11px;font-weight:normal;color:#000;transform:scaleX(1.1194)">0 0 -1</span><span class="t" style="left:220.2px;top:862.04px;font-size:11px;font-weight:normal;color:#8c8c8c;transform:scaleX(1.1132)">Radius [double]:</span><span class="t" style="left:313.5px;top:862.04px;font-size:11px;font-weight:normal;color:#000;transform:scaleX(1.1179)">0.5</span><span class="t" style="left:220.2px;top:877.04px;font-size:11px;font-weight:normal;color:#8c8c8c;transform:scaleX(1.1575)">Height [double]:</span><span class="t" style="left:315.5px;top:877.04px;font-size:11px;font-weight:normal;color:#000;transform:scaleX(1.0122)">2</span><span class="t" style="left:220.2px;top:892.04px;font-size:11px;font-weight:bold;color:#2d62b8;transform:scaleX(1.1646)">command&gt;</span><span class="t" style="left:293.7px;top:892.04px;font-size:11px;font-weight:normal;color:#000;transform:scaleX(1.1190)">import</span><span class="t" style="left:220.2px;top:907.04px;font-size:11px;font-weight:normal;color:#8c8c8c;transform:scaleX(1.0985)">Please Wait...</span><span class="t" style="left:220.2px;top:922.04px;font-size:11px;font-weight:bold;color:#2d62b8;transform:scaleX(1.1646)">command&gt;</span><span class="t" style="left:293.7px;top:922.04px;font-size:11px;font-weight:normal;color:#000;transform:scaleX(1.1190)">import</span><span class="t" style="left:220.2px;top:937.04px;font-size:11px;font-weight:normal;color:#8c8c8c;transform:scaleX(1.0985)">Please Wait...</span><span class="t" style="left:220.2px;top:952.04px;font-size:11px;font-weight:bold;color:#2d62b8;transform:scaleX(1.1646)">command&gt;</span><span class="t" style="left:21.5px;top:980.04px;font-size:11px;font-weight:normal;color:#000;transform:scaleX(0.8937)">X:</span><span class="t" style="left:38.0px;top:980.04px;font-size:11px;font-weight:normal;color:#000;transform:scaleX(0.9806)">3.500000</span><span class="t" style="left:123.3px;top:980.04px;font-size:11px;font-weight:normal;color:#000;transform:scaleX(0.9391)">Y:</span><span class="t" style="left:140.0px;top:980.04px;font-size:11px;font-weight:normal;color:#000;transform:scaleX(0.9871)">5.000000</span><span class="t" style="left:225.9px;top:980.04px;font-size:11px;font-weight:normal;color:#000;transform:scaleX(0.9304)">Z:</span><span class="t" style="left:241.5px;top:980.04px;font-size:11px;font-weight:normal;color:#000;transform:scaleX(0.9871)">0.000000</span><span class="t" style="left:323.3px;top:980.04px;font-size:11px;font-weight:normal;color:#000;transform:scaleX(0.9784)">Meters</span><span class="t" style="left:441.2px;top:980.04px;font-size:11px;font-weight:normal;color:#000;transform:scaleX(0.9143)">Pick:</span><span class="t" style="left:470.9px;top:980.04px;font-size:11px;font-weight:normal;color:#000;transform:scaleX(0.9012)">PICK_NEAR</span><span class="t" style="left:620.6px;top:980.04px;font-size:11px;font-weight:normal;color:#000;transform:scaleX(0.9521)">Selection:</span><span class="t" style="left:675.3px;top:980.04px;font-size:11px;font-weight:normal;color:#000;transform:scaleX(0.8802)">SELECTION_ALL</span><span class="t" style="left:1492.4px;top:979.04px;font-size:11px;font-weight:normal;color:#3c8ef0;transform:scaleX(0.9605)">Done.</span>
</body></html>
